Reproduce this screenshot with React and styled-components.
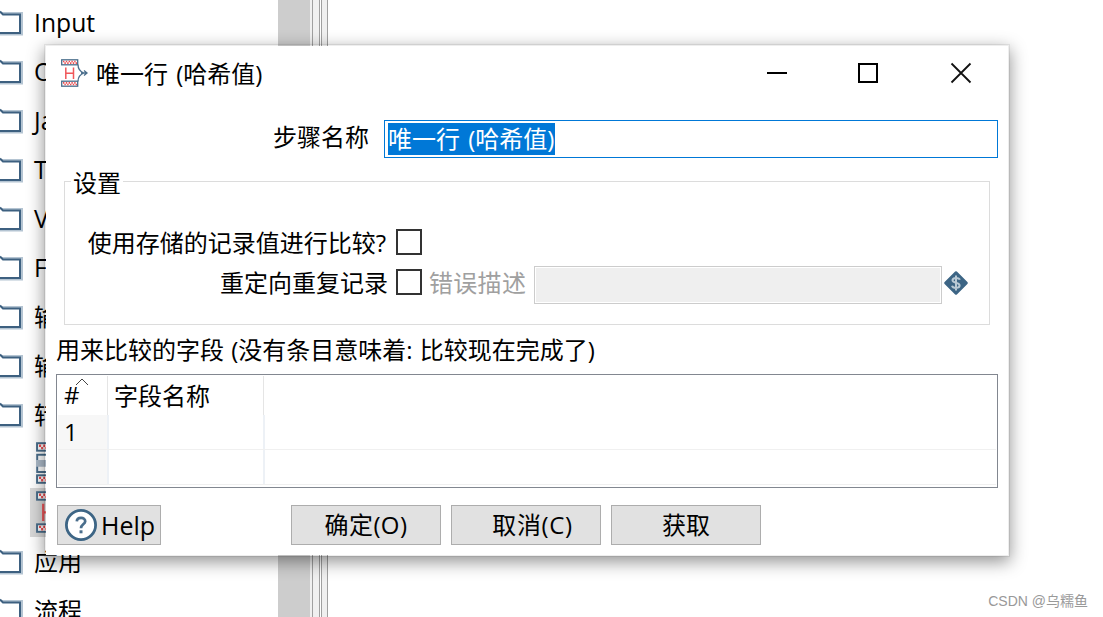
import React from 'react';
import styled, { createGlobalStyle } from 'styled-components';

const GlobalStyle = createGlobalStyle`
    body {
        margin: 0;
        background: #fff;
        color: #000;
        font-family: "Open Sans", "Noto Sans CJK SC", sans-serif;
        font-size: 24px;
        line-height: 36px;
    }
    * {
        box-sizing: border-box;
    }
    svg {
        display: block;
        flex: none;
    }
`;

const StyledScreen = styled.div`
    position: relative;
    display: flex;
    width: 1103px;
    height: 617px;
    overflow: hidden;
`;

const StyledTree = styled.div`
    width: 278px;
    height: 617px;
    overflow: hidden;
`;

const StyledTreeList = styled.div`
    margin-top: -2px;
`;

const StyledTreeItem = styled.div`
    display: flex;
    align-items: center;
    gap: 11px;
    height: 49px;
    font-size: ${props => (props.$latin ? 24.7 : 24)}px;
    white-space: nowrap;
`;

const StyledTreeStep = styled.div`
    height: 49px;
    width: 240px;
    margin-left: 30px;
    padding: 3px 6px;
    background: ${props => (props.$selected ? '#d9d9d9' : 'transparent')};
`;

const StyledScrollbar = styled.div`
    width: 32px;
    background: #cdcdcd;
`;

const StyledSash = styled.div`
    width: ${props => props.$width}px;
    background: #f0f0f0;
    border-right: 1px solid #a0a0a0;
    margin-right: ${props => props.$gap || 0}px;
`;

const StyledDialog = styled.div`
    position: absolute;
    left: 44px;
    top: 44px;
    width: 966px;
    height: 513px;
    display: flex;
    flex-direction: column;
    background: #fff;
    background-clip: padding-box;
    border: 2px solid rgba(0, 0, 0, 0.065);
    box-shadow: 0 5px 16px rgba(0, 0, 0, 0.42);
    white-space: nowrap;
`;

const StyledTitleBar = styled.div`
    display: flex;
    align-items: center;
    height: 54px;
    padding: 0 36px 0 15px;
`;

const StyledTitle = styled.div`
    flex: 1;
    margin-left: 7px;
    padding-top: 1px;
    word-spacing: 2px;
`;

const StyledWindowButtons = styled.div`
    display: flex;
    gap: 70px;
`;

const StyledNameRow = styled.div`
    display: flex;
    align-items: center;
    justify-content: flex-end;
    gap: 15px;
    height: 38px;
    margin: 20px 10px 0 0;
`;

const StyledNameLabel = styled.label`
    padding-bottom: 4px;
`;

const StyledNameField = styled.div`
    display: flex;
    align-items: flex-start;
    width: 614px;
    height: 38px;
    padding: 2px 3px;
    border: 1px solid #0078d7;
`;

const StyledSelection = styled.span`
    height: 32px;
    line-height: 31px;
    background: #0078d7;
    color: #fff;
    word-spacing: 2px;
    padding-right: 1px;
`;

const StyledGroup = styled.fieldset`
    width: 926px;
    height: 155px;
    margin: 12px 0 0 18px;
    padding: 0;
    border: 1px solid #dcdcdc;
`;

const StyledLegend = styled.legend`
    height: 23px;
    margin-left: 6px;
    padding: 0 2px;
    line-height: 25px;
`;

const StyledOption = styled.div`
    display: flex;
    align-items: center;
    height: 40px;
    margin-top: ${props => props.$offset || 0}px;
`;

const StyledOptionLabel = styled.label`
    width: 323px;
    padding-right: ${props => props.$inset || 0}px;
    text-align: right;
`;

const StyledCheckbox = styled.div`
    width: 26px;
    height: 26px;
    margin: 0 7px 2px 8px;
    border: 2px solid #333;
`;

const StyledDisabledLabel = styled.label`
    width: 105px;
    color: #a0a0a0;
    letter-spacing: 0.3px;
`;

const StyledDisabledField = styled.div`
    width: 408px;
    height: 38px;
    margin: 3px 2px 0 0;
    border: 1px solid #ccc;
    padding: 1px;
    background: #efefef content-box;
`;

const StyledCaption = styled.div`
    margin: 7px 0 0 10px;
    height: 42px;
    word-spacing: 1px;
`;

const StyledTable = styled.div`
    width: 942px;
    height: 114px;
    margin-left: 10px;
    padding: 1px 1px 0;
    border: 1px solid #828790;
`;

const StyledTableRow = styled.div`
    display: grid;
    grid-template-columns: ${props => (props.$header ? '50px 156px 1fr' : '51px 156px 1fr')};
    height: ${props => props.$height}px;
    border-bottom: ${props => (props.$header ? 'none' : '1px solid #f0f0f0')};
    > * {
        border-right: ${props => (props.$header ? '1px solid #e5e5e5' : '2px solid #edf1f6')};
    }
    > :first-child {
        background: ${props => (props.$header ? '#fff' : '#f7f7f7')};
    }
    > :last-child {
        border-right: none;
    }
`;

const StyledCell = styled.div`
    position: relative;
    padding-left: 6px;
    line-height: ${props => props.$line || 34}px;
`;

const StyledSortArrow = styled.svg`
    position: absolute;
    left: 17px;
    top: 2px;
`;

const StyledButtonBar = styled.div`
    display: flex;
    gap: 10px;
    margin: 17px 0 0 11px;
`;

const StyledButton = styled.div`
    display: flex;
    align-items: center;
    justify-content: center;
    width: ${props => props.$width || 150}px;
    height: 40px;
    gap: 4px;
    margin-right: ${props => props.$after || 0}px;
    padding-left: ${props => props.$indent || 0}px;
    border: 1px solid #adadad;
    background: #e1e1e1;
    font-size: ${props => (props.$width ? 25 : 24)}px;
    letter-spacing: ${props => props.$spacing || 0}px;
`;

const StyledWatermark = styled.div`
    position: absolute;
    right: 15px;
    bottom: 5px;
    font-family: "Liberation Sans", "Noto Sans CJK SC", sans-serif;
    font-size: 14px;
    line-height: 22px;
    color: #999;
`;

function FolderIcon() {
    return (
        <svg width="23" height="30" viewBox="0 0 23 30">
            <path d="M0 5.5H22V26H0" fill="none" stroke="#b4c4d2" strokeWidth="3" />
            <path d="M0 3.5l3 3H20V25H0" fill="#fff" stroke="#3d6080" strokeWidth="2" />
        </svg>
    );
}

function Band({ y }) {
    return (
        <g>
            <rect x="0.7" y={y} width="16" height="5" fill="#fff" stroke="#4a6e8c" strokeWidth="1.3" />
            <path
                d={`M2 ${y + 1.7}H16M3.4 ${y + 3.3}H16`}
                stroke="#ee4f52"
                strokeWidth="1.6"
                strokeDasharray="1.4 1.4"
            />
        </g>
    );
}

function HashStepIcon({ size }) {
    return (
        <svg width={size} height={size} viewBox="0 0 28 28">
            <Band y={0.8} />
            <Band y={22.2} />
            <path
                d="M17 5.5C17 10 18.5 12.5 23 14C18.5 15.5 17 18 17 22.5M20 14H26M23 11.5L26 14L23 16.5"
                fill="none"
                stroke="#4a6e8c"
                strokeWidth="1.3"
            />
            <path d="M4.8 8.5V20M12.5 8.5V20M4.8 14.3H12.5" fill="none" stroke="#f0575a" strokeWidth="1.5" />
        </svg>
    );
}

function UniqueStepIcon() {
    return (
        <svg width="42" height="42" viewBox="0 0 28 28">
            <Band y={0.8} />
            <Band y={22.2} />
            <rect x="0.8" y="8.5" width="16" height="11.5" fill="#fff" stroke="#4a6e8c" strokeWidth="1.3" />
            <rect x="0" y="12" width="16" height="4.5" fill="#aebccb" />
        </svg>
    );
}

function HelpIcon() {
    return (
        <svg width="32" height="32" viewBox="0 0 32 32">
            <circle cx="16" cy="16" r="14.6" fill="#fff" stroke="#3d6585" strokeWidth="2.8" />
            <path d="M11.8 12.4C12 7.5 20.4 7.8 20.2 12.3C20 15.3 16 15.5 16 19.2" fill="none" stroke="#4a6e8c" strokeWidth="2.7" />
            <rect x="14.5" y="21.3" width="3" height="3" fill="#4a6e8c" />
        </svg>
    );
}

function VariableIcon() {
    return (
        <svg width="24" height="24" viewBox="0 0 24 24">
            <path d="M12 1.5L22.5 12L12 22.5L1.5 12Z" fill="#3d6585" stroke="#3d6585" strokeWidth="2.5" strokeLinejoin="round" />
            <path
                d="M15.8 8.8C15 6.2 8.5 6.3 8.5 9.3C8.5 12.6 15.6 11 15.6 14.6C15.6 17.7 8.8 17.6 8 14.8M12 4.5V19.5"
                fill="none"
                stroke="#b9c9d5"
                strokeWidth="2"
            />
        </svg>
    );
}

function TreeFolder({ name, latin }) {
    return (
        <StyledTreeItem $latin={latin}>
            <FolderIcon />
            <span>{name}</span>
        </StyledTreeItem>
    );
}

const latinFolders = ['Input', 'Output', 'Java', 'Table', 'Value', 'Flow'];
const folders = ['输入', '输出', '转换'];

function StepTree() {
    return (
        <StyledTree>
            <StyledTreeList>
                {latinFolders.map(name => <TreeFolder key={name} name={name} latin />)}
                {folders.map(name => <TreeFolder key={name} name={name} />)}
                <StyledTreeStep><UniqueStepIcon /></StyledTreeStep>
                <StyledTreeStep $selected><HashStepIcon size={42} /></StyledTreeStep>
                <TreeFolder name="应用" />
                <TreeFolder name="流程" />
            </StyledTreeList>
        </StyledTree>
    );
}

function UniqueRowsDialog() {
    return (
        <StyledDialog>
            <StyledTitleBar>
                <HashStepIcon size={28} />
                <StyledTitle>唯一行 (哈希值)</StyledTitle>
                <StyledWindowButtons>
                    <svg width="22" height="22"><path d="M1 11H21" stroke="#000" strokeWidth="2" /></svg>
                    <svg width="22" height="22"><rect x="1" y="2" width="18" height="18" fill="none" stroke="#000" strokeWidth="2" /></svg>
                    <svg width="22" height="22"><path d="M1.5 1.5L20.5 20.5M20.5 1.5L1.5 20.5" stroke="#111" strokeWidth="1.8" /></svg>
                </StyledWindowButtons>
            </StyledTitleBar>
            <StyledNameRow>
                <StyledNameLabel>步骤名称</StyledNameLabel>
                <StyledNameField>
                    <StyledSelection>唯一行 (哈希值)</StyledSelection>
                </StyledNameField>
            </StyledNameRow>
            <StyledGroup>
                <StyledLegend>设置</StyledLegend>
                <StyledOption $offset={30}>
                    <StyledOptionLabel $inset={2}>使用存储的记录值进行比较?</StyledOptionLabel>
                    <StyledCheckbox />
                </StyledOption>
                <StyledOption>
                    <StyledOptionLabel>重定向重复记录</StyledOptionLabel>
                    <StyledCheckbox />
                    <StyledDisabledLabel>错误描述</StyledDisabledLabel>
                    <StyledDisabledField />
                    <VariableIcon />
                </StyledOption>
            </StyledGroup>
            <StyledCaption>用来比较的字段 (没有条目意味着: 比较现在完成了)</StyledCaption>
            <StyledTable>
                <StyledTableRow $header $height={39}>
                    <StyledCell $line={38}>
                        #
                        <StyledSortArrow width="14" height="8">
                            <path d="M1 7L7 1L13 7" fill="none" stroke="#444" />
                        </StyledSortArrow>
                    </StyledCell>
                    <StyledCell $line={39}>字段名称</StyledCell>
                    <StyledCell />
                </StyledTableRow>
                <StyledTableRow $height={35}>
                    <StyledCell>1</StyledCell>
                    <StyledCell />
                    <StyledCell />
                </StyledTableRow>
                <StyledTableRow $height={35}>
                    <StyledCell />
                    <StyledCell />
                    <StyledCell />
                </StyledTableRow>
            </StyledTable>
            <StyledButtonBar>
                <StyledButton $width={104} $after={120} $indent={2}>
                    <HelpIcon />
                    Help
                </StyledButton>
                <StyledButton $spacing={0.4}>确定(O)</StyledButton>
                <StyledButton $spacing={0.6} $indent={13}>取消(C)</StyledButton>
                <StyledButton>获取</StyledButton>
            </StyledButtonBar>
        </StyledDialog>
    );
}

export default function App() {
    return (
        <StyledScreen>
            <GlobalStyle />
            <StepTree />
            <StyledScrollbar />
            <StyledSash $width={3} />
            <StyledSash $width={7} $gap={1} />
            <StyledSash $width={1} />
            <StyledSash $width={6} />
            <UniqueRowsDialog />
            <StyledWatermark>CSDN @乌糯鱼</StyledWatermark>
        </StyledScreen>
    );
}
